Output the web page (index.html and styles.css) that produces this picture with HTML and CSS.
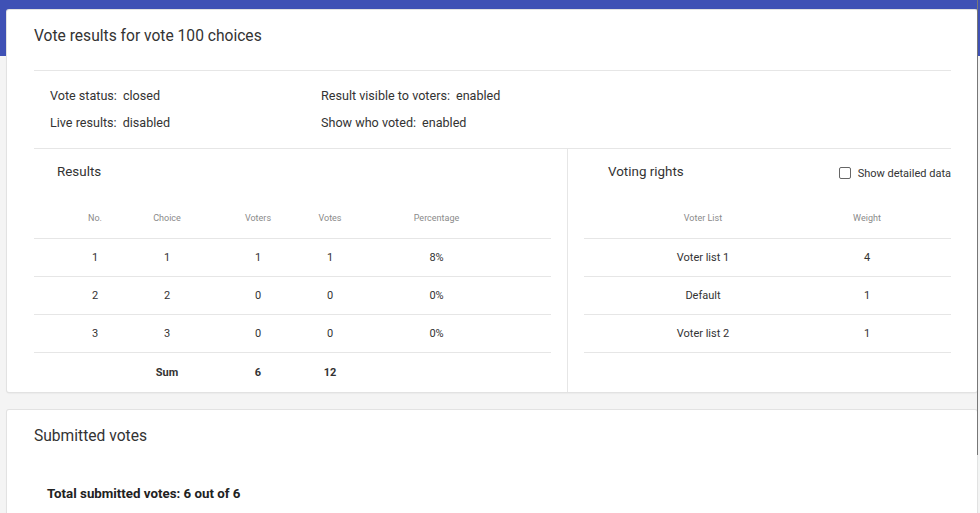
FILE: index.html
```html
<!DOCTYPE html>
<html lang="en">
<head>
    <meta charset="UTF-8">
    <meta name="viewport" content="width=device-width, initial-scale=1.0">
    <title>Vote results</title>
    <link rel="stylesheet" href="styles.css">
</head>
<body>
    <div class="toolbar"></div>
    <div class="page">
        <div class="card">
            <h2 class="card-title">Vote results for vote 100 choices</h2>
            <div class="status">
                <div class="status-item"><span class="label">Vote status:</span>closed</div>
                <div class="status-item"><span class="label">Result visible to voters:</span>enabled</div>
                <div class="status-item"><span class="label">Live results:</span>disabled</div>
                <div class="status-item"><span class="label">Show who voted:</span>enabled</div>
            </div>
            <div class="columns">
                <div class="results">
                    <div class="section-head">
                        <h3>Results</h3>
                    </div>
                    <div class="table results-table">
                        <div class="row head">
                            <div>No.</div><div>Choice</div><div>Voters</div><div>Votes</div><div>Percentage</div>
                        </div>
                        <div class="row">
                            <div>1</div><div>1</div><div>1</div><div>1</div><div>8%</div>
                        </div>
                        <div class="row">
                            <div>2</div><div>2</div><div>0</div><div>0</div><div>0%</div>
                        </div>
                        <div class="row">
                            <div>3</div><div>3</div><div>0</div><div>0</div><div>0%</div>
                        </div>
                        <div class="row sum">
                            <div></div><div>Sum</div><div>6</div><div>12</div><div></div>
                        </div>
                    </div>
                </div>
                <div class="rights">
                    <div class="section-head">
                        <h3>Voting rights</h3>
                        <label class="check"><span class="box"></span>Show detailed data</label>
                    </div>
                    <div class="table rights-table">
                        <div class="row head">
                            <div>Voter List</div><div>Weight</div>
                        </div>
                        <div class="row">
                            <div>Voter list 1</div><div>4</div>
                        </div>
                        <div class="row">
                            <div>Default</div><div>1</div>
                        </div>
                        <div class="row">
                            <div>Voter list 2</div><div>1</div>
                        </div>
                    </div>
                </div>
            </div>
        </div>

        <div class="card">
            <h2 class="card-title">Submitted votes</h2>
            <p class="total">Total submitted votes: 6 out of 6</p>
        </div>
    </div>
    <div class="scrollbar"></div>
</body>
</html>
```

FILE: styles.css
```css
body {
    margin: 0;
    font-family: Roboto, "Liberation Sans", Arial, sans-serif;
    color: #333;
    background-color: #f4f4f4;
    height: 513px;
    overflow: hidden;
}
.toolbar {
    height: 56px;
    background-color: #3f51b5;
    margin-bottom: -46px;
}
.page {
    padding: 0 3px 0 7px;
}
.card {
    background: white;
    padding: 0 26px 0 27px;
    border-radius: 2px;
    box-shadow: 0 0 0 1px #e2e2e2, 0 1px 2px rgba(0, 0, 0, 0.12);
    margin-bottom: 18px;
}
.card-title {
    margin: 0;
    padding: 16px 0 24px;
    font-size: 15.6px;
    line-height: 20px;
    font-weight: 400;
    color: #333;
}
.status {
    border-top: 1px solid #e6e6e6;
    border-bottom: 1px solid #e6e6e6;
    padding: 11px 16px 12px;
    display: grid;
    grid-template-columns: 271px 1fr;
    font-size: 12.6px;
    line-height: 27px;
}
.status .label {
    margin-right: 6px;
}
.columns {
    display: flex;
}
.results {
    width: 517px;
    padding-right: 16px;
    border-right: 1px solid #e6e6e6;
}
.rights {
    flex: 1;
    padding-left: 16px;
    height: 243px;
}
.section-head {
    display: flex;
    align-items: center;
    justify-content: space-between;
    padding: 13px 0 14px 23px;
    height: 20px;
}
.rights .section-head {
    padding-left: 24px;
}
.section-head h3 {
    margin: 0;
    font-size: 13.4px;
    line-height: 20px;
    font-weight: 400;
}
.check {
    display: flex;
    align-items: center;
    font-size: 11px;
    color: #333;
    margin-top: 2px;
}
.check .box {
    width: 10px;
    height: 10px;
    border: 1.5px solid #666;
    border-radius: 2px;
    margin-right: 7px;
}
.row {
    display: grid;
    align-items: center;
    text-align: center;
    height: 38px;
    border-bottom: 1px solid #e6e6e6;
    font-size: 11px;
    box-sizing: border-box;
}
.row.head {
    height: 43px;
    padding-top: 1px;
    font-size: 9px;
    color: #8a8a8a;
}
.row.sum {
    height: 39px;
    font-weight: 700;
    border-bottom: none;
}
.results-table .row {
    grid-template-columns: 98px 70px 112px 32px 1fr;
}
.results-table .row > div:first-child {
    padding-left: 24px;
}
.results-table .row > div:last-child {
    padding-right: 24px;
}
.rights-table .row {
    grid-template-columns: 214px 1fr;
}
.rights-table .row > div:first-child {
    padding-left: 24px;
}
.rights-table .row > div:last-child {
    padding-right: 15px;
}
.total {
    margin: 0;
    padding: 16px 0 30px 13px;
    font-size: 13.3px;
    font-weight: 700;
    color: #222;
}
.scrollbar {
    position: fixed;
    top: 0;
    right: 2px;
    width: 1px;
    height: 455px;
    background: #777;
}
```
